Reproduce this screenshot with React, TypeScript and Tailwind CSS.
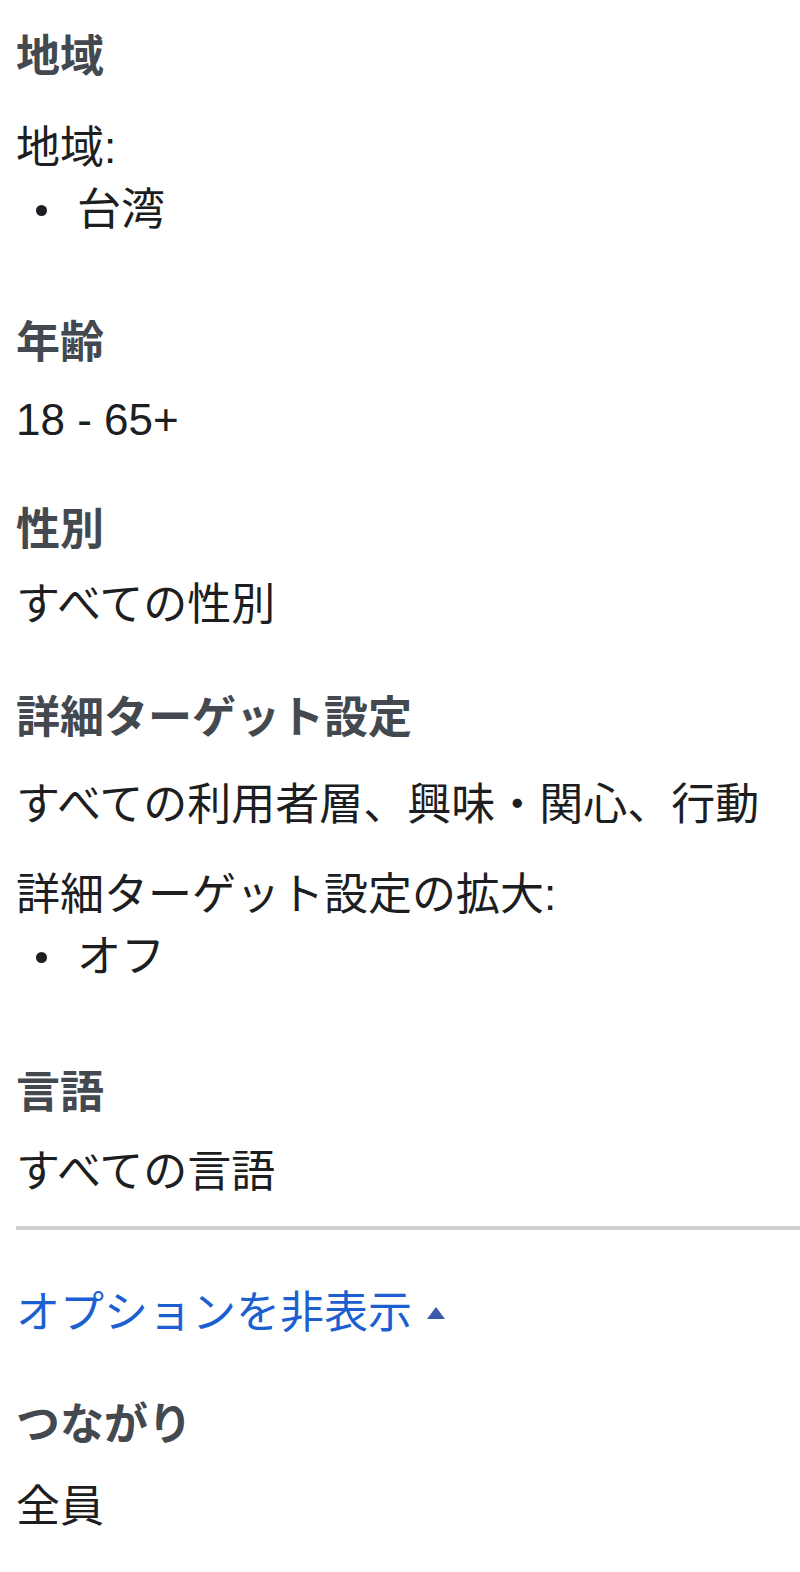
import React from 'react';

const font = { fontFamily: '"Liberation Sans", "Noto Sans CJK JP", sans-serif' };

const Heading: React.FC<{ children: React.ReactNode; className?: string }> = ({ children, className = '' }) => (
  <div className={`text-[44px] leading-[62px] font-bold text-[#444950] ${className}`}>{children}</div>
);

const Line: React.FC<{ children: React.ReactNode; className?: string }> = ({ children, className = '' }) => (
  <div className={`text-[44px] leading-[62px] text-[#1c1e21] ${className}`}>{children}</div>
);

const Bullet: React.FC<{ children: React.ReactNode }> = ({ children }) => (
  <div className="flex items-center text-[44px] leading-[62px] text-[#1c1e21]">
    <span className="ml-[20px] mr-[30px] inline-block h-[11px] w-[11px] rounded-full bg-[#1c1e21]" />
    <span>{children}</span>
  </div>
);

export default function App() {
  return (
    <div className="min-h-[1572px] bg-white pl-[16px] pt-[26px] pb-[36px]" style={font}>
      <Heading>地域</Heading>
      <Line className="mt-[29px]">地域:</Line>
      <Bullet>台湾</Bullet>

      <Heading className="mt-[71px]">年齢</Heading>
      <Line className="mt-[15px]">18 - 65+</Line>

      <Heading className="mt-[48px]">性別</Heading>
      <Line className="mt-[13px]">すべての性別</Line>

      <Heading className="mt-[51px]">詳細ターゲット設定</Heading>
      <Line className="mt-[25px]">すべての利用者層、興味・関心、行動</Line>
      <Line className="mt-[28px]">詳細ターゲット設定の拡大:</Line>
      <Bullet>オフ</Bullet>

      <Heading className="mt-[74px]">言語</Heading>
      <Line className="mt-[17px]">すべての言語</Line>

      <div className="mt-[23px] h-[4px] bg-[#ced0d4]" />

      <div className="mt-[52px] flex items-center text-[44px] leading-[62px] text-[#1b5fd0]">
        <span>オプションを非表示</span>
        <svg className="ml-[14px]" width="20" height="14" viewBox="0 0 20 14">
          <path d="M10 1 L19 13 L1 13 Z" fill="#3a5ba8" />
        </svg>
      </div>

      <Heading className="mt-[50px]">つながり</Heading>
      <Line className="mt-[20px]">全員</Line>
    </div>
  );
}
